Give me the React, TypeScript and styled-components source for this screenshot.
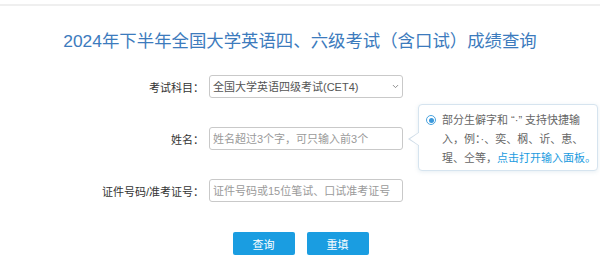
import React from "react";
import styled, { createGlobalStyle } from "styled-components";
import { ChevronDown } from "lucide-react";

const GlobalStyle = createGlobalStyle`
  html, body {
    margin: 0;
    padding: 0;
    background: #fff;
  }
  body {
    font-family: "Liberation Sans", "Noto Sans CJK SC", sans-serif;
    font-size: 11px;
    color: #333;
  }
`;

const Page = styled.div`
  width: 600px;
  height: 272px;
  overflow: hidden;
  background: #fff;
`;

const TopBar = styled.div`
  height: 4px;
  border-bottom: 2px solid #efefef;
`;

const Title = styled.h1`
  margin: 23px 0 0;
  font-size: 17.4px;
  line-height: 24px;
  font-weight: normal;
  text-align: center;
  color: #3c7bbd;
`;

const Form = styled.form`
  margin-top: 22px;
  display: grid;
  grid-template-columns: 204px 194px;
  column-gap: 5px;
  row-gap: 29px;
  align-items: center;
`;

const Label = styled.label`
  text-align: right;
  font-size: 11px;
  color: #333;
  white-space: nowrap;
`;

const Field = styled.div`
  position: relative;
  height: 23px;
`;

const fieldBox = `
  box-sizing: border-box;
  width: 100%;
  height: 100%;
  border: 1px solid #c9c9c9;
  border-radius: 3px;
  padding: 0 3px;
  font-family: "Liberation Sans", "Noto Sans CJK SC", sans-serif;
  font-size: 11px;
  background: #fff;
  outline: none;
`;

const Select = styled.select`
  ${fieldBox}
  appearance: none;
  color: #555;
`;

const SelectArrow = styled(ChevronDown)`
  position: absolute;
  right: 3px;
  top: 7px;
  color: #888;
  pointer-events: none;
`;

const Input = styled.input`
  ${fieldBox}
  color: #333;
  &::placeholder {
    color: #9a9a9a;
  }
`;

const Tip = styled.div`
  position: absolute;
  left: calc(100% + 15px);
  top: -23px;
  width: 180px;
  height: 67px;
  box-sizing: border-box;
  padding: 6px 4px 3px 7px;
  display: flex;
  gap: 6px;
  background: #fff;
  border: 1px solid #d6e4ef;
  border-radius: 4px;
  box-shadow: 0 1px 4px rgba(120, 160, 190, 0.18);
  z-index: 2;

  &::before,
  &::after {
    content: "";
    position: absolute;
    top: 27px;
    width: 0;
    height: 0;
    border-style: solid;
  }
  &::before {
    left: -11px;
    border-width: 7px 11px 7px 0;
    border-color: transparent #d0dde8 transparent transparent;
  }
  &::after {
    left: -9px;
    border-width: 7px 10px 7px 0;
    border-color: transparent #fff transparent transparent;
  }
`;

const Radio = styled.span`
  flex: none;
  margin-top: 4px;
  width: 10px;
  height: 10px;
  box-sizing: border-box;
  border: 1px solid #4aa3de;
  border-radius: 50%;
  display: flex;
  align-items: center;
  justify-content: center;
  &::after {
    content: "";
    width: 5px;
    height: 5px;
    border-radius: 50%;
    background: #3b98db;
  }
`;

const TipText = styled.div`
  font-size: 11px;
  line-height: 19px;
  color: #666;
`;

const TipLine = styled.span`
  display: block;
  white-space: nowrap;
`;

const TipLink = styled.a`
  color: #1b9be0;
  text-decoration: none;
`;

const Buttons = styled.div`
  margin-top: 30px;
  display: flex;
  justify-content: center;
  gap: 12px;
  padding-left: 1px;
`;

const Button = styled.button`
  width: 62px;
  height: 23px;
  border: none;
  border-radius: 2px;
  background: #1a9de1;
  color: #fff;
  font-family: "Liberation Sans", "Noto Sans CJK SC", sans-serif;
  font-size: 11px;
  padding: 0;
  cursor: pointer;
`;

export default function App() {
  return (
    <Page>
      <GlobalStyle />
      <TopBar />
      <Title>2024年下半年全国大学英语四、六级考试（含口试）成绩查询</Title>
      <Form onSubmit={(e) => e.preventDefault()}>
        <Label>考试科目：</Label>
        <Field>
          <Select defaultValue="cet4">
            <option value="cet4">全国大学英语四级考试(CET4)</option>
            <option value="cet6">全国大学英语六级考试(CET6)</option>
          </Select>
          <SelectArrow size={9} strokeWidth={2.5} />
        </Field>

        <Label>姓名：</Label>
        <Field>
          <Input placeholder="姓名超过3个字，可只输入前3个" />
          <Tip>
            <Radio />
            <TipText>
              <TipLine>部分生僻字和 “·” 支持快捷输</TipLine>
              <TipLine>入，例：·、奕、㭎、䜣、恵、</TipLine>
              <TipLine>
                瑆、仝等，<TipLink href="#">点击打开输入面板。</TipLink>
              </TipLine>
            </TipText>
          </Tip>
        </Field>

        <Label>证件号码/准考证号：</Label>
        <Field>
          <Input placeholder="证件号码或15位笔试、口试准考证号" />
        </Field>
      </Form>
      <Buttons>
        <Button type="button">查询</Button>
        <Button type="button">重填</Button>
      </Buttons>
    </Page>
  );
}
